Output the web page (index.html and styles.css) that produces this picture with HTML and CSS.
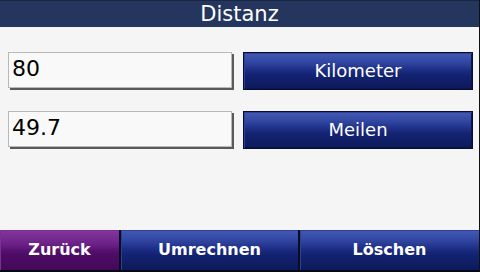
FILE: index.html
```html
<!DOCTYPE html>
<html lang="de">
<head>
<meta charset="utf-8">
<title>Distanz</title>
<link rel="stylesheet" href="styles.css">
</head>
<body>
<div class="screen">
  <header class="title">Distanz</header>
  <main class="content">
    <div class="row">
      <div class="field">80</div>
      <div class="unit-btn">Kilometer</div>
    </div>
    <div class="row">
      <div class="field">49.7</div>
      <div class="unit-btn">Meilen</div>
    </div>
  </main>
  <footer class="bar">
    <div class="bar-btn back">Zurück</div>
    <div class="bar-btn convert">Umrechnen</div>
    <div class="bar-btn clear">Löschen</div>
  </footer>
</div>
</body>
</html>
```
FILE: styles.css
```css
html, body {
  margin: 0;
  padding: 0;
  background: #000;
}
body {
  font-family: "DejaVu Sans", "Liberation Sans", sans-serif;
}
.screen {
  width: 479px;
  height: 272px;
  border-right: 1px solid #111;
  background: #f5f5f5;
  display: flex;
  flex-direction: column;
  overflow: hidden;
}
.title {
  height: 27px;
  background: #24365e;
  color: #fff;
  font-size: 21px;
  line-height: 27px;
  text-align: center;
  border-top: 1px solid #1a2540;
  box-sizing: border-box;
}
.content {
  flex: 1;
  padding: 25px 6px 0 8px;
  display: flex;
  flex-direction: column;
  gap: 21px;
}
.row {
  display: flex;
  align-items: flex-start;
  gap: 11px;
}
.field {
  width: 224px;
  height: 36px;
  box-sizing: border-box;
  background: #f9f9f9;
  border: 1px solid #b8b8b8;
  box-shadow: 2px 2px 0 #5a5a5a;
  color: #000;
  font-size: 22px;
  line-height: 32px;
  padding-left: 3px;
}
.unit-btn {
  width: 230px;
  height: 38px;
  box-sizing: border-box;
  border: 1px solid #070c30;
  background:
    linear-gradient(180deg, rgba(110,140,230,0.35) 0%, rgba(110,140,230,0.15) 30%, rgba(0,0,0,0) 45%),
    linear-gradient(180deg, #2b3f9c 0%, #1e3088 45%, #142372 60%, #0c1a5a 100%);
  box-shadow: inset 1px 1px 0 #2d3f96, inset -1px -1px 0 #0a1550;
  color: #fff;
  font-size: 18px;
  line-height: 36px;
  text-align: center;
}
.bar {
  height: 42px;
  display: flex;
  background: #0a0d20;
  gap: 2px;
  border-bottom: 2px solid #060818;
  box-sizing: border-box;
}
.bar-btn {
  color: #fff;
  font-weight: bold;
  font-size: 16px;
  line-height: 40px;
  text-align: center;
  box-sizing: border-box;
}
.back {
  width: 119px;
  background:
    linear-gradient(180deg, rgba(190,120,220,0.25) 0%, rgba(190,120,220,0.1) 35%, rgba(0,0,0,0) 50%),
    linear-gradient(180deg, #6e2288 0%, #5e1478 45%, #4e0c66 60%, #440858 100%);
  box-shadow: inset 1px 1px 0 #7a3090;
}
.convert {
  width: 177px;
  background:
    linear-gradient(180deg, rgba(110,140,230,0.35) 0%, rgba(110,140,230,0.15) 30%, rgba(0,0,0,0) 45%),
    linear-gradient(180deg, #2b3f9c 0%, #1e3088 45%, #142372 60%, #0c1a5a 100%);
  box-shadow: inset 1px 1px 0 #2d3f96;
}
.clear {
  flex: 1;
  background:
    linear-gradient(180deg, rgba(110,140,230,0.35) 0%, rgba(110,140,230,0.15) 30%, rgba(0,0,0,0) 45%),
    linear-gradient(180deg, #2b3f9c 0%, #1e3088 45%, #142372 60%, #0c1a5a 100%);
  box-shadow: inset 1px 1px 0 #2d3f96;
}
```
